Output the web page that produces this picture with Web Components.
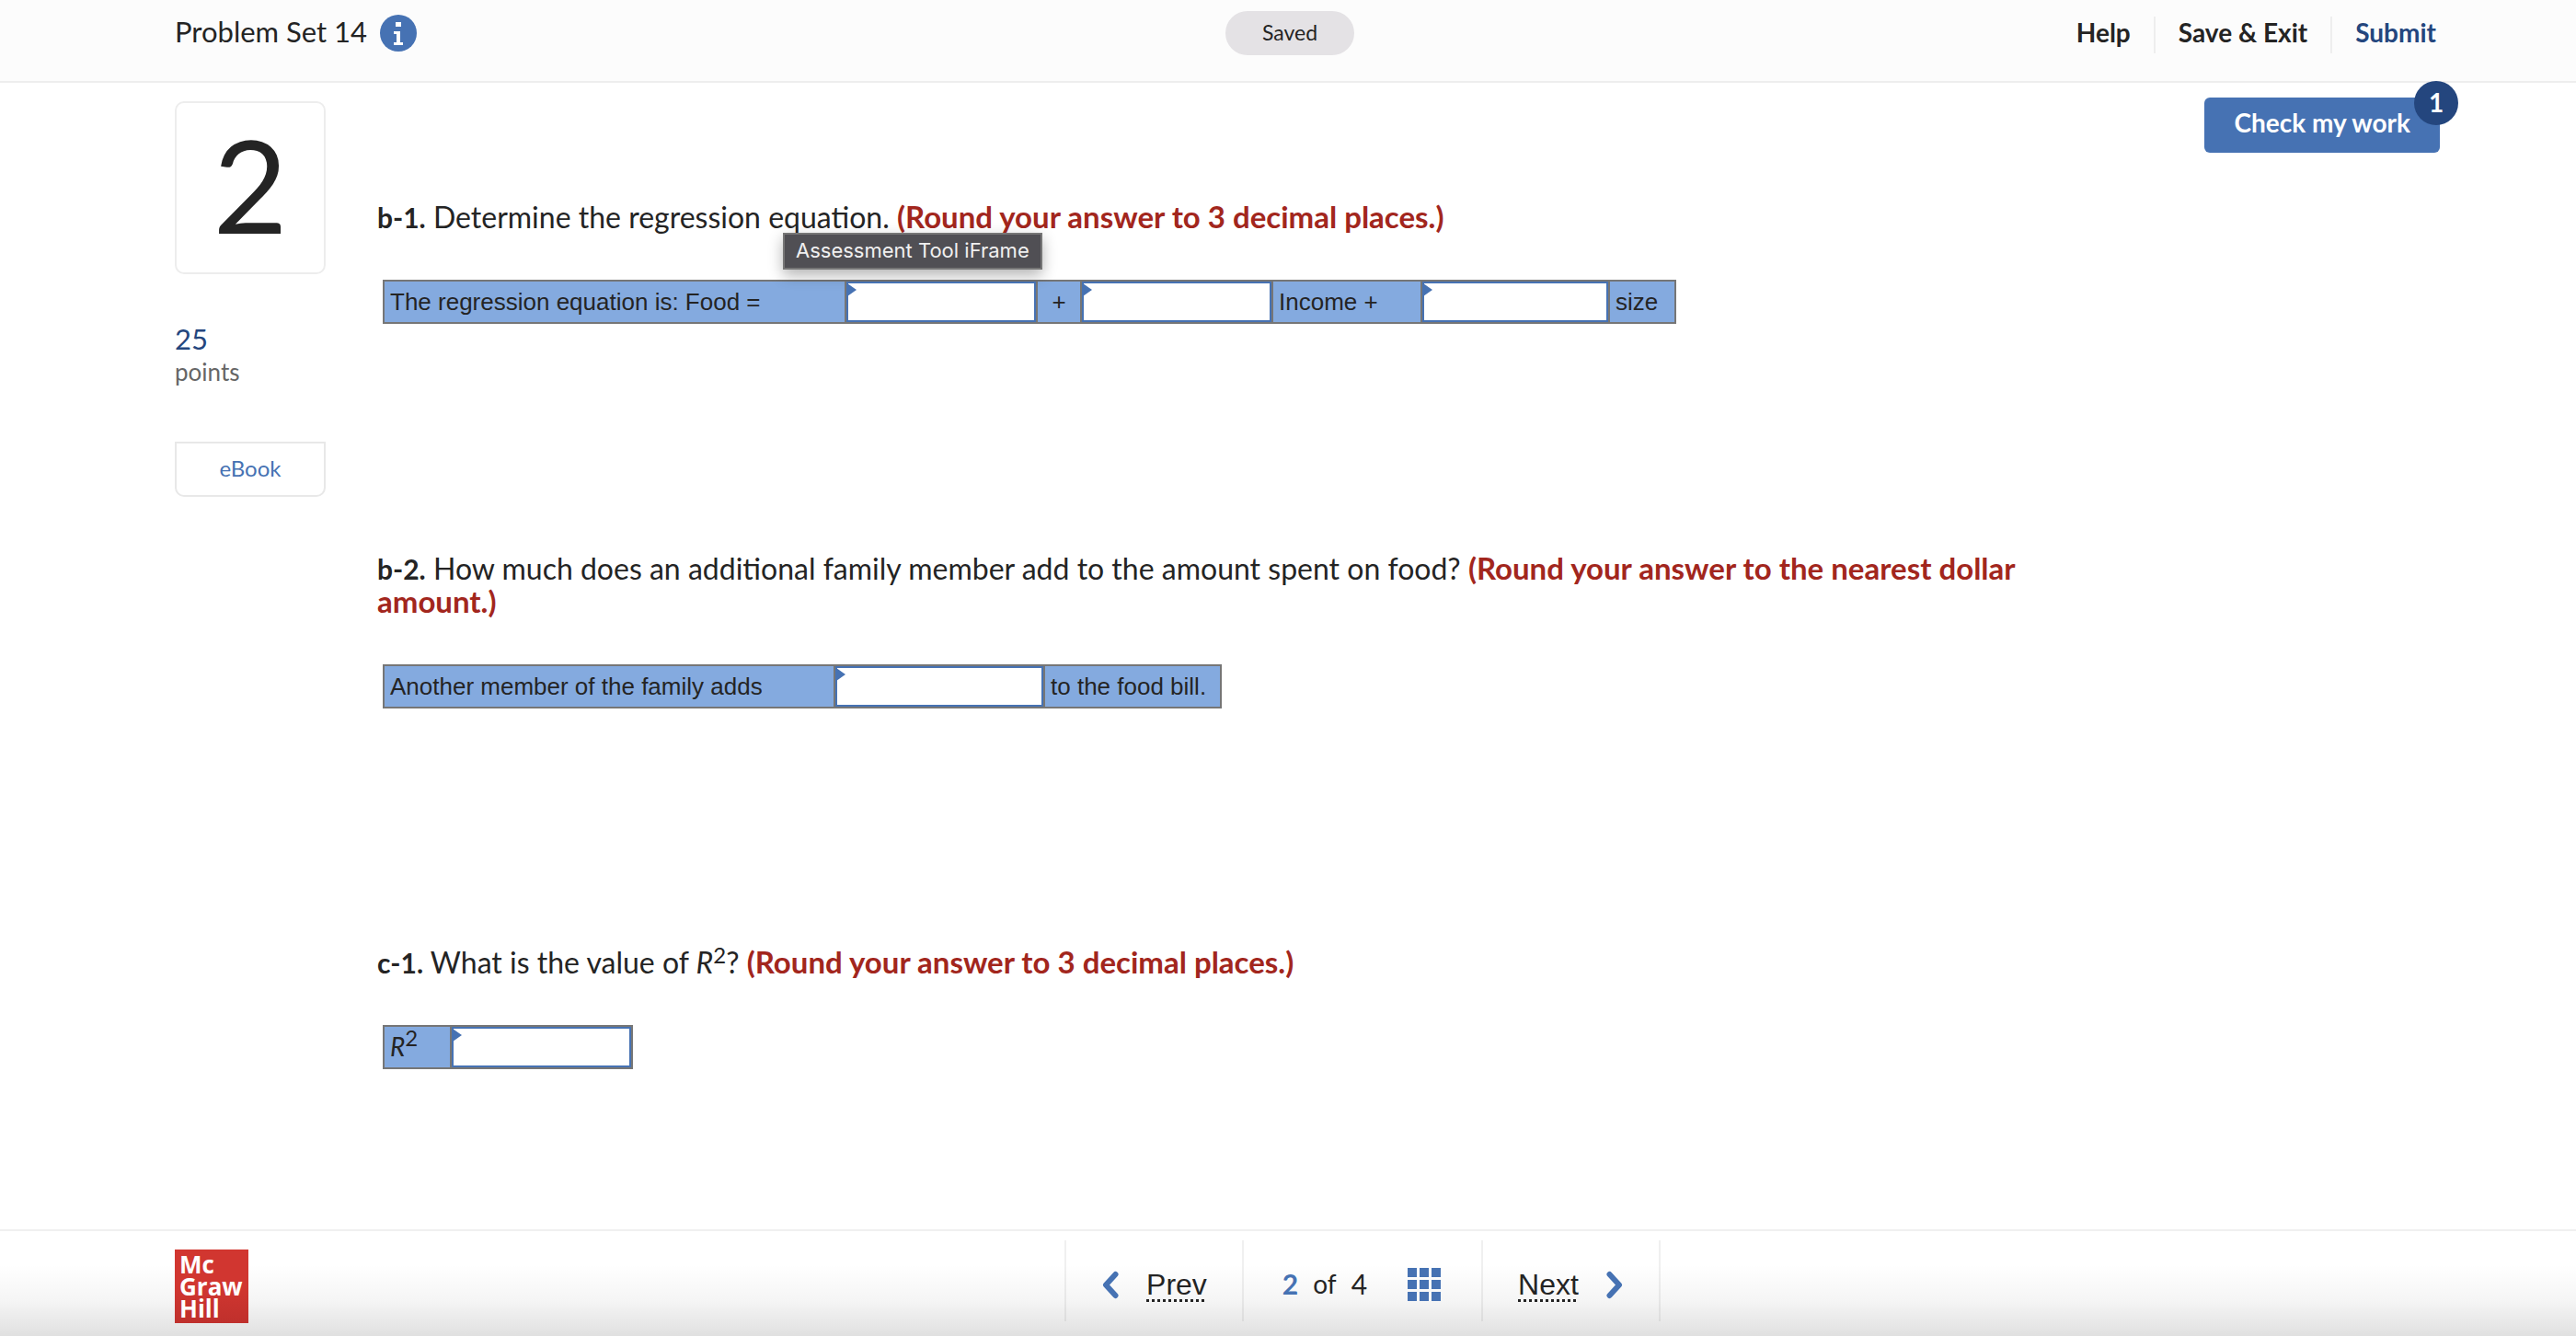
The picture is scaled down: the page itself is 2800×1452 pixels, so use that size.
<!DOCTYPE html>
<html lang="en">
<head>
<meta charset="utf-8">
<title>Problem Set 14</title>
<style>
    body {
        margin: 0;
        color: #242424;
        background-color: white;
        font-family: Lato, "Open Sans", sans-serif;
        font-size: 32px;
        line-height: 36px;

        --blue: #4672b3;
        --navy: #24467e;
        --line: #eeeeee;
        --red: #a2261d;
    }
</style>
</head>
<body>
<assessment-page>
    <page-header slot="header" title="Problem Set 14" status="Saved"></page-header>
    <question-rail slot="rail" number="2" points="25"></question-rail>
    <check-button slot="action" count="1">Check my work</check-button>

    <question-part name="b1" label="b-1.">
        Determine the regression equation.
        <round-note>(Round your answer to 3 decimal places.)</round-note>
        <frame-tooltip slot="tooltip">Assessment Tool iFrame</frame-tooltip>
    </question-part>
    <question-part name="b2" label="b-2.">
        How much does an additional family member add to the amount spent on food?
        <round-note>(Round your answer to the nearest dollar amount.)</round-note>
    </question-part>
    <question-part name="c1" label="c-1.">
        What is the value of <r-squared></r-squared>?
        <round-note>(Round your answer to 3 decimal places.)</round-note>
    </question-part>

    <page-footer slot="footer" current="2" total="4"></page-footer>
</assessment-page>

<script>
// cells of each answer row: text cells and input cells with their widths
const answerRows = {
    b1: [
        { text: 'The regression equation is: Food =', width: 500 },
        { input: 'Intercept', width: 208 },
        { text: '+', width: 48, center: true },
        { input: 'Income coefficient', width: 208 },
        { text: 'Income +', width: 162 },
        { input: 'Size coefficient', width: 204 },
        { text: 'size', width: 72 },
    ],
    b2: [
        { text: 'Another member of the family adds', width: 488 },
        { input: 'Amount added', width: 228 },
        { text: 'to the food bill.', width: 192 },
    ],
    c1: [
        { text: '<r-squared></r-squared>', width: 71 },
        { input: 'R squared', width: 197 },
    ],
};

class BaseElement extends HTMLElement {
    constructor() {
        super();

        this.attachShadow({ mode: 'open' });
    }

    connectedCallback() {
        this.shadowRoot.innerHTML = this.template();
    }
}

// assessment-page
class AssessmentPage extends BaseElement {
    template() {
        return `
            <style>
            :host {
                display: flex;
                flex-direction: column;
                min-height: 100vh;
            }

            main {
                flex: 1;
                display: grid;
                grid-template-columns: 164px minmax(0, 1fr) auto;
                align-items: start;
                padding: 0 148px 0 190px;
            }

            .rail {
                padding-top: 20px;
            }

            .parts {
                padding: 128px 136px 0 56px;
            }

            .action {
                padding-top: 16px;
            }
            </style>
            <slot name="header"></slot>
            <main>
                <div class="rail"><slot name="rail"></slot></div>
                <div class="parts"><slot></slot></div>
                <div class="action"><slot name="action"></slot></div>
            </main>
            <slot name="footer"></slot>
        `;
    }
}

// page-header
class PageHeader extends BaseElement {
    template() {
        return `
            <style>
            :host {
                display: block;
            }

            header {
                display: grid;
                grid-template-columns: 1fr auto 1fr;
                align-items: start;
                height: 88px;
                padding: 0 152px 0 190px;

                background-color: #fcfcfc;
                border-bottom: 2px solid var(--line);
            }

            .title {
                display: flex;
                align-items: center;
                gap: 14px;
                padding-top: 16px;
            }

            h1 {
                margin: 0;
                padding-bottom: 4px;
                font-size: 31px;
                font-weight: 400;
            }

            .info {
                width: 40px;
                height: 40px;
                padding: 0;
                border: 0;
                background: none;
            }

            svg {
                display: block;
            }

            .status {
                margin: 12px 34px 0 0;
                padding: 0 40px 2px;

                font-size: 23px;
                line-height: 46px;
                background-color: #e4e2e5;
                border-radius: 24px;
            }

            nav {
                display: flex;
                justify-content: flex-end;
                padding-top: 18px;
            }

            a {
                padding: 0 25px 6px;

                color: inherit;
                font-size: 28px;
                font-weight: 700;
                line-height: 34px;
                text-decoration: none;
                border-left: 2px solid var(--line);
            }

            a:first-child {
                border-left: 0;
            }

            a:last-child {
                padding-right: 0;
                color: var(--navy);
            }
            </style>
            <header>
                <div class="title">
                    <h1>${this.getAttribute('title')}</h1>
                    <button class="info" aria-label="Information">
                        <svg width="40" height="40" viewBox="0 0 40 40">
                            <circle cx="20" cy="20" r="20" fill="#4672b3"/>
                            <rect x="17" y="8" width="6" height="5" fill="#fff"/>
                            <path d="M15 18h7v12h3v3H15v-3h3v-9h-3z" fill="#fff"/>
                        </svg>
                    </button>
                </div>
                <div class="status">${this.getAttribute('status')}</div>
                <nav>
                    <a href="#help">Help</a>
                    <a href="#exit">Save &amp; Exit</a>
                    <a href="#submit">Submit</a>
                </nav>
            </header>
        `;
    }
}

// question-rail
class QuestionRail extends BaseElement {
    template() {
        return `
            <style>
            :host {
                display: block;
            }

            .number {
                padding: 8px 0 16px;

                font-size: 140px;
                line-height: 160px;
                text-align: center;
                border: 2px solid #ededed;
                border-radius: 10px;
            }

            .points {
                margin: 52px 0 0;
                color: #666666;
                font-size: 26px;
            }

            strong {
                display: block;
                color: var(--navy);
                font-size: 31px;
                font-weight: 400;
            }

            button {
                width: 100%;
                height: 60px;
                margin-top: 58px;
                padding: 0 0 2px;

                color: var(--blue);
                font: inherit;
                font-size: 24px;
                background-color: white;
                border: 2px solid #e8e8e8;
                border-radius: 0 0 10px 10px;
            }
            </style>
            <div class="number">${this.getAttribute('number')}</div>
            <p class="points"><strong>${this.getAttribute('points')}</strong>points</p>
            <button>eBook</button>
        `;
    }
}

// check-button
class CheckButton extends BaseElement {
    template() {
        return `
            <style>
            :host {
                display: block;
                position: relative;
            }

            button {
                height: 60px;
                padding: 0 32px 6px;

                color: white;
                font: inherit;
                font-size: 28px;
                font-weight: 700;
                background-color: var(--blue);
                border: 0;
                border-radius: 6px;
            }

            .count {
                position: absolute;
                top: -18px;
                right: -20px;
                width: 48px;
                padding-bottom: 2px;

                color: white;
                font-size: 28px;
                font-weight: 700;
                line-height: 46px;
                text-align: center;
                background-color: var(--navy);
                border-radius: 50%;
            }
            </style>
            <button><slot></slot></button>
            <span class="count">${this.getAttribute('count')}</span>
        `;
    }
}

// question-part
class QuestionPart extends BaseElement {
    template() {
        return `
            <style>
            :host {
                display: block;
                position: relative;
                margin-bottom: 248px;
            }

            :host([name="b2"]) {
                margin-bottom: 258px;
            }

            :host(:last-of-type) {
                margin-bottom: 96px;
            }

            p {
                margin: 0 0 50px;
            }

            b {
                font-size: 30px;
                line-height: 30px;
            }
            </style>
            <p><b>${this.getAttribute('label')}</b> <slot></slot></p>
            <slot name="tooltip"></slot>
            <answer-row name="${this.getAttribute('name')}"></answer-row>
        `;
    }
}

// round-note
class RoundNote extends BaseElement {
    template() {
        return `
            <style>
            :host {
                color: var(--red);
                font-size: 33px;
                font-weight: 700;
                line-height: 30px;
            }
            </style>
            <slot></slot>
        `;
    }
}

// r-squared
class RSquared extends BaseElement {
    template() {
        return `
            <style>
            sup {
                font-size: 24px;
                line-height: 0;
                vertical-align: 11px;
            }
            </style><i>R</i><sup>2</sup>`;
    }
}

// frame-tooltip
class FrameTooltip extends BaseElement {
    template() {
        return `
            <style>
            :host {
                position: absolute;
                top: 35px;
                left: 441px;
                padding: 0 12px 2px;

                color: #f0f0f0;
                font-family: Inter, sans-serif;
                font-size: 22px;
                line-height: 34px;
                background-color: #504f54;
                border: 2px solid #767676;
                box-shadow: 0 6px 16px rgb(0 0 0 / 0.3);
            }
            </style>
            <slot></slot>
        `;
    }
}

// answer-row
class AnswerRow extends BaseElement {
    template() {
        return `
            <style>
            :host {
                display: block;
                margin-left: 6px;
            }

            table {
                border: 2px solid #767676;
                border-spacing: 0;
                font-family: "Liberation Sans", Arial, sans-serif;
                font-size: 26px;
                line-height: 30px;
            }

            td {
                box-sizing: border-box;
                height: 44px;
                padding: 0 6px;

                white-space: nowrap;
                background-color: #84aadf;
            }

            td + td {
                border-left: 2px solid #767676;
            }

            td.field {
                position: relative;
                padding: 0;
            }

            /* corner flag of an empty field */
            td.field::after {
                content: "";
                position: absolute;
                top: 2px;
                left: 1px;
                width: 10px;
                height: 14px;
                background-color: var(--blue);
                clip-path: polygon(0 0, 100% 50%, 0 100%);
            }

            td.center {
                padding: 0;
                text-align: center;
            }

            r-squared {
                font-family: Lato, sans-serif;
                font-size: 28px;
            }

            input {
                display: block;
                box-sizing: border-box;
                width: 100%;
                height: 44px;
                padding: 0 12px;

                font: inherit;
                background-color: white;
                border: 2px solid var(--blue);
                border-radius: 0;
            }
            </style>
            <table><tr>${answerRows[this.getAttribute('name')].map((cell) => this.cell(cell)).join('')}</tr></table>
        `;
    }

    cell({ text, input, width, center }) {
        const style = `style="min-width: ${width}px; width: ${width}px"`;
        if (input) {
            return `<td class="field" ${style}><input type="text" aria-label="${input}"></td>`;
        }
        return `<td class="${center ? 'center' : ''}" ${style}>${text}</td>`;
    }
}

// page-footer
class PageFooter extends BaseElement {
    template() {
        return `
            <style>
            :host {
                display: block;
            }

            footer {
                display: flex;
                align-items: flex-start;
                height: 114px;
                padding: 0 146px 0 190px;

                background-image: linear-gradient(rgb(0 0 0 / 0) 32%, rgb(0 0 0 / 0.04) 66%, rgb(0 0 0 / 0.12));
                border-top: 2px solid #f0f0f0;
            }

            .logo {
                box-sizing: border-box;
                width: 80px;
                height: 80px;
                margin-top: 20px;
                padding: 4px 5px;

                color: white;
                font-family: "Open Sans", sans-serif;
                font-size: 26px;
                font-weight: 700;
                line-height: 24px;
                text-decoration: none;
                background-image: linear-gradient(#d13630 50%, #bf302c);
            }

            nav {
                display: flex;
                margin: 10px 0 0 36%;
                border-right: 2px solid rgb(0 0 0 / 0.06);
            }

            nav > * {
                display: flex;
                align-items: center;
                box-sizing: border-box;
                height: 88px;
                border-left: 2px solid rgb(0 0 0 / 0.06);
            }

            nav a {
                color: inherit;
                font-family: "Liberation Sans", Arial, sans-serif;
                font-size: 32px;
                text-decoration: none;
            }

            .prev {
                gap: 30px;
                padding: 8px 38px 0 39px;
            }

            .next {
                gap: 30px;
                padding: 8px 39px 0 38px;
            }

            a span {
                padding-bottom: 1px;
                background: repeating-linear-gradient(90deg, #242424 0 3px, transparent 3px 6px) bottom / 100% 3px no-repeat;
            }

            .pages {
                gap: 16px;
                padding: 6px 44px 0 42px;
                font-size: 30px;
            }

            .pages b {
                color: var(--blue);
            }

            .pages .of {
                font-size: 28px;
            }

            .pages button {
                margin-left: 28px;
                padding: 0;
                border: 0;
                background: none;
            }

            svg {
                display: block;
            }
            </style>
            <footer>
                <a class="logo" href="#home">Mc<br>Graw<br>Hill</a>
                <nav>
                    <a class="prev" href="#prev">
                        <svg width="18" height="36" viewBox="0 0 18 36">
                            <path d="M14.500 7L4 18.500L14.500 30" fill="none" stroke="#4672b3" stroke-width="6" stroke-linecap="round" stroke-linejoin="round"/>
                        </svg>
                        <span>Prev</span>
                    </a>
                    <div class="pages">
                        <b>${this.getAttribute('current')}</b>
                        <span class="of">of</span>
                        <span>${this.getAttribute('total')}</span>
                        <button aria-label="Question list">
                            <svg width="36" height="38" viewBox="0 0 36 38" fill="#4672b3">
                                <path d="M0 2h10v10H0zM13 2h10v10H13zM26 2h10v10H26zM0 15h10v10H0zM13 15h10v10H13zM26 15h10v10H26zM0 28h10v10H0zM13 28h10v10H13zM26 28h10v10H26z"/>
                            </svg>
                        </button>
                    </div>
                    <a class="next" href="#next">
                        <span>Next</span>
                        <svg width="18" height="36" viewBox="0 0 18 36">
                            <path d="M3.500 7L14 18.500L3.500 30" fill="none" stroke="#4672b3" stroke-width="6" stroke-linecap="round" stroke-linejoin="round"/>
                        </svg>
                    </a>
                </nav>
            </footer>
        `;
    }
}

customElements.define('assessment-page', AssessmentPage);
customElements.define('page-header', PageHeader);
customElements.define('question-rail', QuestionRail);
customElements.define('check-button', CheckButton);
customElements.define('question-part', QuestionPart);
customElements.define('round-note', RoundNote);
customElements.define('r-squared', RSquared);
customElements.define('frame-tooltip', FrameTooltip);
customElements.define('answer-row', AnswerRow);
customElements.define('page-footer', PageFooter);
</script>
</body>
</html>
